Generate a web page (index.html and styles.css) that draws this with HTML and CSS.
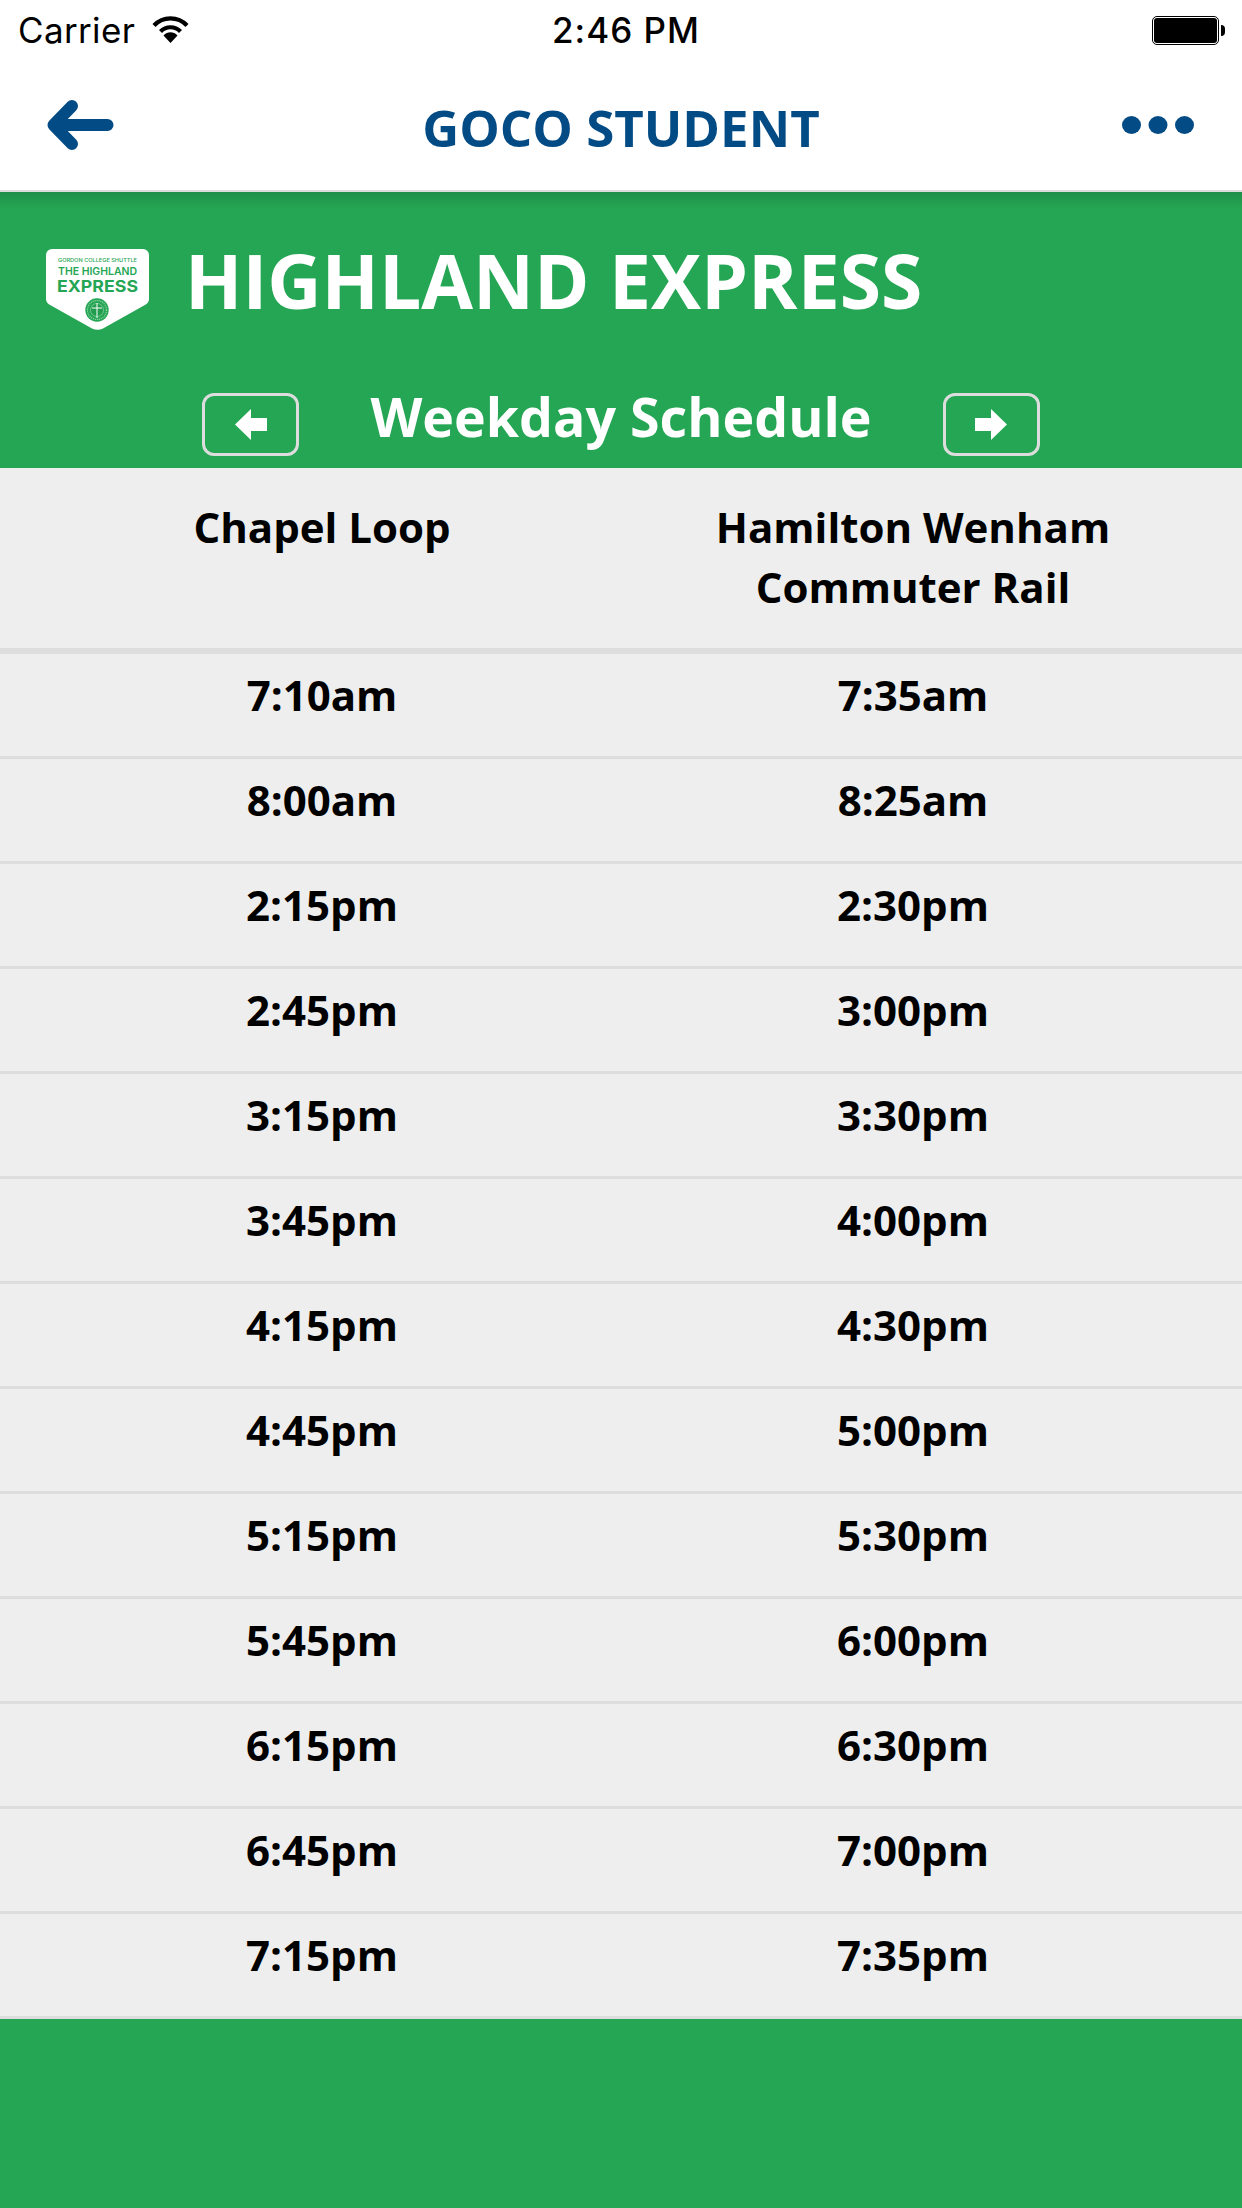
FILE: index.html
```html
<!DOCTYPE html>
<html lang="en">
<head>
<meta charset="utf-8">
<title>GOCO Student</title>
<link rel="stylesheet" href="styles.css">
</head>
<body>
<div class="app">
  <div class="status">
    <div class="status-left">
      <span class="carrier">Carrier</span>
      <svg class="wifi" width="37" height="27" viewBox="0 0 37 27"><path class="arc" d="M2 9.500C11 0 26 0 35 9.500"/><path class="arc" d="M8.500 15.500C14 9.800 23 9.800 28.500 15.500"/><path d="M18.500 27L11.500 19.500C15.500 15.300 21.500 15.300 25.500 19.500Z"/></svg>
    </div>
    <span class="time">2:46 PM</span>
    <div class="status-right">
      <span class="battery"><span class="battery-fill"></span></span><span class="nub"></span>
    </div>
  </div>
  <nav class="nav">
    <svg class="back" width="67" height="52" viewBox="0 0 67 52"><path d="M60.500 26H8M25 7L6.500 26L25 45" fill="none" stroke="#034b85" stroke-width="12" stroke-linecap="round" stroke-linejoin="round"/></svg>
    <h1 class="nav-title">GOCO STUDENT</h1>
    <svg class="more" width="72" height="18" viewBox="0 0 72 18"><ellipse cx="9.500" cy="9" rx="9.500" ry="9"/><ellipse cx="36" cy="9" rx="9.500" ry="9"/><ellipse cx="62.500" cy="9" rx="9.500" ry="9"/></svg>
  </nav>
  <header class="route">
    <div class="route-top">
      <svg class="logo" width="103" height="81" viewBox="0 0 103 81">
        <path d="M6 0H97A6 6 0 0 1 103 6V50Q103 54 98 56.500L57 79.500Q51.500 82 46 79.500L5 56.500Q0 54 0 50V6A6 6 0 0 1 6 0Z" fill="#fff"/>
        <text x="12" y="13" class="logo-small" textLength="79" lengthAdjust="spacingAndGlyphs">GORDON COLLEGE SHUTTLE</text>
        <text x="12" y="26" class="logo-mid" textLength="79" lengthAdjust="spacingAndGlyphs">THE HIGHLAND</text>
        <text x="11" y="43" class="logo-big" textLength="81" lengthAdjust="spacingAndGlyphs">EXPRESS</text>
        <circle cx="51" cy="61" r="11.700" fill="#25a654"/>
        <circle cx="51" cy="61" r="9.500" fill="none" stroke="#9fd8b4" stroke-width="1.200" stroke-dasharray="1 1"/>
        <circle cx="51" cy="61" r="6.500" fill="#1f9c4c" stroke="#bfe6cc" stroke-width="0.500"/>
        <path d="M51 54V69M46 59H56" stroke="#fff" stroke-width="1"/>
      </svg>
      <h2 class="route-name">HIGHLAND EXPRESS</h2>
    </div>
    <div class="route-sub">
      <button class="pager"><svg width="32" height="31" viewBox="0 0 32 31"><path d="M0 15.500L16 0V9H32V22H16V31Z" fill="#fff"/></svg></button>
      <span class="sched">Weekday Schedule</span>
      <button class="pager"><svg width="32" height="31" viewBox="0 0 32 31"><path d="M32 15.500L16 0V9H0V22H16V31Z" fill="#fff"/></svg></button>
    </div>
  </header>
  <section class="table">
    <div class="row head"><div>Chapel Loop</div><div>Hamilton Wenham<br>Commuter Rail</div></div>
    <div class="row"><div>7:10am</div><div>7:35am</div></div>
    <div class="row"><div>8:00am</div><div>8:25am</div></div>
    <div class="row"><div>2:15pm</div><div>2:30pm</div></div>
    <div class="row"><div>2:45pm</div><div>3:00pm</div></div>
    <div class="row"><div>3:15pm</div><div>3:30pm</div></div>
    <div class="row"><div>3:45pm</div><div>4:00pm</div></div>
    <div class="row"><div>4:15pm</div><div>4:30pm</div></div>
    <div class="row"><div>4:45pm</div><div>5:00pm</div></div>
    <div class="row"><div>5:15pm</div><div>5:30pm</div></div>
    <div class="row"><div>5:45pm</div><div>6:00pm</div></div>
    <div class="row"><div>6:15pm</div><div>6:30pm</div></div>
    <div class="row"><div>6:45pm</div><div>7:00pm</div></div>
    <div class="row"><div>7:15pm</div><div>7:35pm</div></div>
  </section>
  <div class="foot"></div>
</div>
</body>
</html>
```
FILE: styles.css
```css
* { box-sizing: border-box; }
html, body { margin: 0; padding: 0; }
body { width: 1242px; height: 2208px; overflow: hidden; background: #fff; font-family: "Open Sans", sans-serif; }
.app { display: flex; flex-direction: column; height: 2208px; }

.status { height: 60px; display: grid; grid-template-columns: 1fr auto 1fr; align-items: center; padding: 0 17px 0 18px; font-family: Inter, sans-serif; font-size: 35px; color: #000; }
.status-left { display: flex; align-items: center; gap: 17px; }
.carrier { line-height: 60px; letter-spacing: 0.350px; }
.wifi { margin-bottom: 1px; }
.wifi .arc { fill: none; stroke: #000; stroke-width: 4.200; }
.time { margin-left: 9px; font-weight: 500; letter-spacing: 1px; }
.status-right { display: flex; align-items: center; justify-content: flex-end; }
.battery { width: 67px; height: 29px; border: 1px solid #000; border-radius: 5px; padding: 1px; display: block; }
.battery-fill { display: block; width: 100%; height: 100%; background: #000; border-radius: 3px; }
.nub { width: 4px; height: 11px; margin-left: 2px; background: #000; border-radius: 0 4px 4px 0; }

.nav { height: 132px; padding: 0 48px 0 47px; display: flex; align-items: center; justify-content: space-between; border-bottom: 2px solid #ddd; position: relative; }
.back { display: block; }
.back, .more { fill: #034b85; flex: none; }
.nav-title { margin: 3px 0 0 6px; font-size: 51px; font-weight: 700; color: #034b85; line-height: 60px; }

.route { height: 276px; background: linear-gradient(#1f8f49 0, #25a654 16px); color: #fff; display: flex; flex-direction: column; }
.route-top { display: flex; align-items: center; height: 167px; padding: 9px 0 0 46px; gap: 36px; }
.logo { flex: none; margin-top: 19px; }
.logo-small { font-family: Inter, sans-serif; font-size: 5px; font-weight: 500; fill: #25a654; }
.logo-mid { font-family: Inter, sans-serif; font-size: 10.500px; font-weight: 600; fill: #25a654; }
.logo-big { font-family: Inter, sans-serif; font-size: 16.500px; font-weight: 700; fill: #25a654; }
.route-name { margin: 0; font-size: 75px; font-weight: 700; line-height: 90px; }
.route-sub { display: flex; align-items: flex-start; justify-content: center; gap: 71px; padding-top: 34px; }
.sched { font-size: 53.700px; font-weight: 700; line-height: 64px; margin-top: -8px; }
.pager { width: 97px; height: 63px; padding: 0; background: transparent; border: 3px solid #ddd; border-radius: 12px; display: flex; align-items: center; justify-content: center; }
.pager svg { display: block; }

.table { background: #eee; color: #000; font-weight: 700; font-size: 42px; }
.row { display: grid; grid-template-columns: 644px 538px; height: 105px; align-items: center; text-align: center; border-bottom: 3px solid #ddd; line-height: 60px; padding-bottom: 20px; }
.row.head { height: 186px; align-items: start; padding: 29px 0 0; border-bottom-width: 6px; }
.foot { flex: 1; background: #25a654; }
```
